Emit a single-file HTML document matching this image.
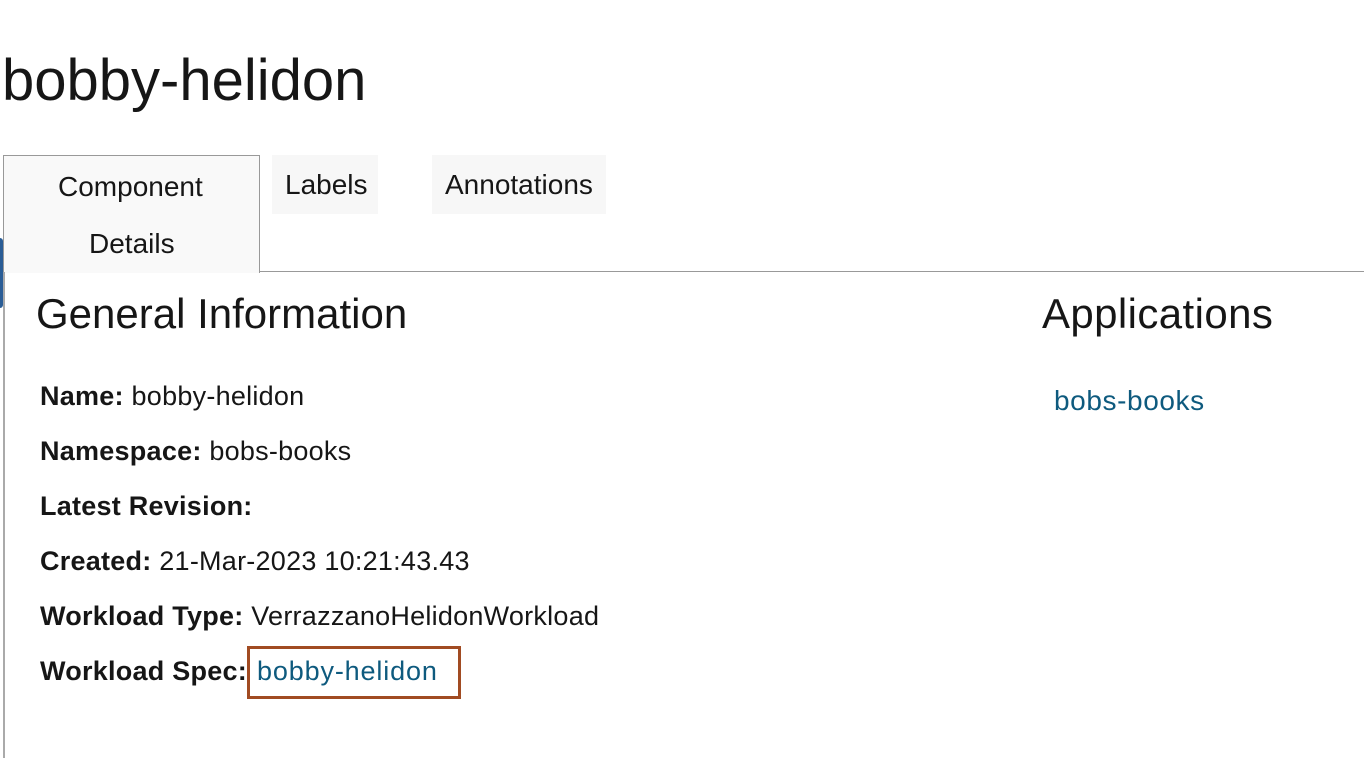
<!DOCTYPE html>
<html><head><meta charset="utf-8"><style>
body{margin:0;width:1364px;height:758px;background:#fff;position:relative;overflow:hidden;font-family:"Liberation Sans",Arial,sans-serif;color:#161616}
.a{position:absolute;line-height:1;white-space:nowrap}
.b{font-weight:bold}
.l{color:#0e5a7e}
.r{font-size:27px;letter-spacing:0.25px}
</style></head><body>
<div class="a" style="left:2px;top:52px;font-size:58px">bobby-helidon</div>
<div style="position:absolute;left:3px;top:155px;width:255px;height:117px;background:#f9f9f9;border:1px solid #999;border-bottom:none"></div>
<div style="position:absolute;left:272px;top:155px;width:106px;height:59px;background:#f7f7f7"></div>
<div style="position:absolute;left:432px;top:155px;width:174px;height:59px;background:#f7f7f7"></div>
<div style="position:absolute;left:259px;top:271px;width:1105px;height:1px;background:#999"></div>
<div style="position:absolute;left:3px;top:272px;width:2px;height:486px;background:#aaa"></div>
<div style="position:absolute;left:0;top:238px;width:3px;height:70px;background:#2a5d96;border-radius:0 3px 3px 0"></div>
<div class="a" style="left:58px;top:173px;font-size:28px">Component</div>
<div class="a" style="left:89px;top:230px;font-size:28px">Details</div>
<div class="a" style="left:285px;top:171px;font-size:28px">Labels</div>
<div class="a" style="left:445px;top:171px;font-size:28px">Annotations</div>
<div class="a" style="left:36px;top:293px;font-size:42px">General Information</div>
<div class="a" style="left:1042px;top:293px;font-size:42px;letter-spacing:0.4px">Applications</div>
<div class="a l" style="left:1054px;top:387px;font-size:28px;letter-spacing:0.6px">bobs-books</div>
<div class="a r" style="left:40px;top:383px"><span class="b">Name:</span> bobby-helidon</div>
<div class="a r" style="left:40px;top:438px"><span class="b">Namespace:</span> bobs-books</div>
<div class="a r" style="left:40px;top:493px"><span class="b">Latest Revision:</span></div>
<div class="a r" style="left:40px;top:548px"><span class="b">Created:</span> 21-Mar-2023 10:21:43.43</div>
<div class="a r" style="left:40px;top:603px"><span class="b">Workload Type:</span> VerrazzanoHelidonWorkload</div>
<div class="a r" style="left:40px;top:658px"><span class="b">Workload Spec:</span></div>
<div class="a r l" style="left:257px;top:658px;letter-spacing:0.85px">bobby-helidon</div>
<div style="position:absolute;left:247px;top:646px;width:208px;height:47px;border:3px solid #a14b22"></div>
</body></html>
